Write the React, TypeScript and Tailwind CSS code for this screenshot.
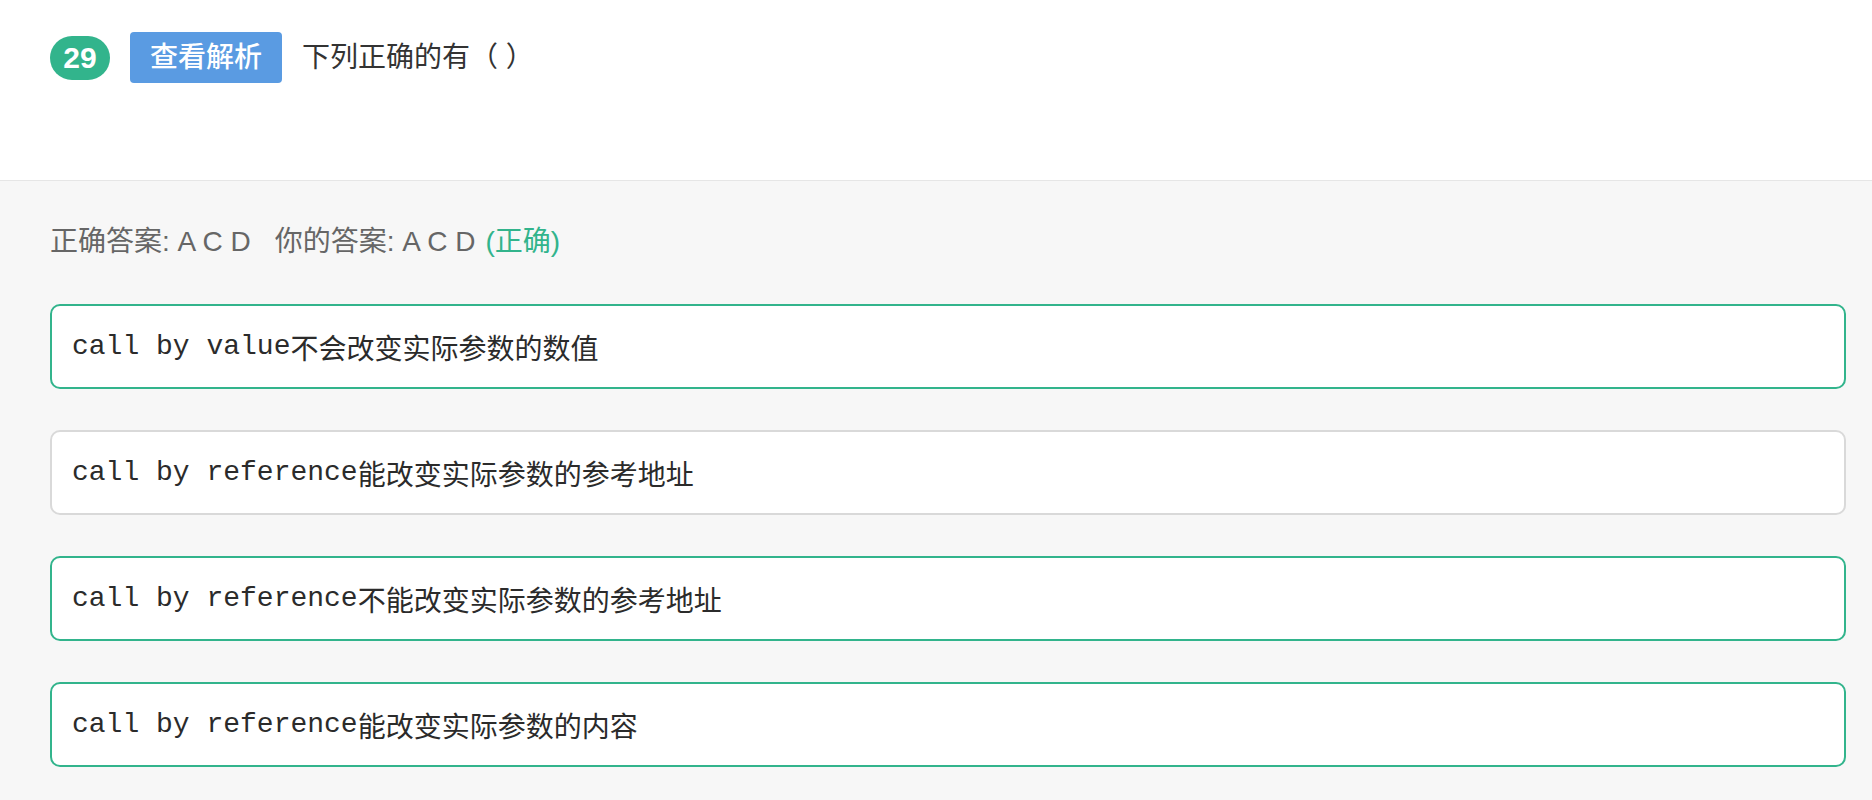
const options = [
  { code: 'call by value', text: '不会改变实际参数的数值', correct: true },
  { code: 'call by reference', text: '能改变实际参数的参考地址', correct: false },
  { code: 'call by reference', text: '不能改变实际参数的参考地址', correct: true },
  { code: 'call by reference', text: '能改变实际参数的内容', correct: true },
];

export default function App() {
  return (
    <div className="min-h-screen bg-[#f7f7f7] font-['Liberation_Sans','Noto_Sans_CJK_SC',sans-serif]">
      {/* question header */}
      <div className="h-[180px] bg-white pl-[50px] pt-[32px]">
        <div className="flex h-[51px] items-center">
          <span className="flex h-[44px] w-[60px] items-center justify-center rounded-full bg-[#32b48c] text-[30px] font-bold text-white">
            29
          </span>
          <button
            type="button"
            className="ml-[20px] h-[51px] w-[152px] rounded-[4px] bg-[#5a9be2] text-[28px] font-medium text-white"
          >
            查看解析
          </button>
          <span className="ml-[20px] text-[28px] text-[#333]">下列正确的有（ ）</span>
        </div>
      </div>

      {/* answers */}
      <div className="border-t border-[#e6e6e6] pl-[50px] pr-[26px] pt-[41px] pb-[33px]">
        <div className="flex h-[40px] items-center text-[28px] text-[#666]">
          <span>正确答案: A C D</span>
          <span className="ml-[24px]">你的答案: A C D</span>
          <span className="ml-[10px] text-[#32b48c]">(正确)</span>
        </div>

        <div className="mt-[42px] flex flex-col gap-[41px]">
          {options.map((o, i) => (
            <div
              key={i}
              className={`flex h-[85px] items-center rounded-[10px] border-2 bg-white px-[20px] text-[28px] text-[#2b2b2b] ${
                o.correct ? 'border-[#32b48c]' : 'border-[#d9d9d9]'
              }`}
            >
              <span className="font-['Liberation_Mono',monospace]">{o.code}</span>
              <span className="font-['Noto_Sans_CJK_SC',sans-serif]">{o.text}</span>
            </div>
          ))}
        </div>
      </div>
    </div>
  );
}
